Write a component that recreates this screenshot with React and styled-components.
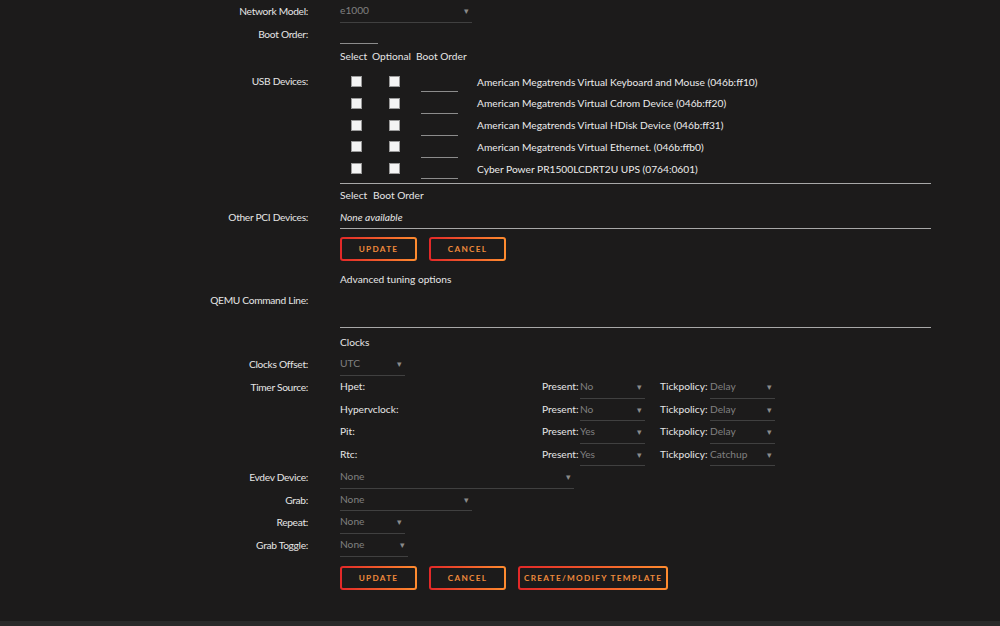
import React from "react";
import styled, { createGlobalStyle } from "styled-components";

const usbDevices = [
  "American Megatrends Virtual Keyboard and Mouse (046b:ff10)",
  "American Megatrends Virtual Cdrom Device (046b:ff20)",
  "American Megatrends Virtual HDisk Device (046b:ff31)",
  "American Megatrends Virtual Ethernet. (046b:ffb0)",
  "Cyber Power PR1500LCDRT2U UPS (0764:0601)",
];

const timers = [
  { name: "Hpet:", present: "No", tick: "Delay" },
  { name: "Hypervclock:", present: "No", tick: "Delay" },
  { name: "Pit:", present: "Yes", tick: "Delay" },
  { name: "Rtc:", present: "Yes", tick: "Catchup" },
];

const App = () => {
  return (
    <Page>
      <GlobalStyle />
      <Form>
        <Row>
          <Label>Network Model:</Label>
          <Select w={132}>e1000</Select>
        </Row>
        <Row>
          <Label>Boot Order:</Label>
          <TextInput w={38} />
        </Row>
        <Row>
          <Label />
          <Head>
            <HeadCell w={32}>Select</HeadCell>
            <HeadCell w={44}>Optional</HeadCell>
            <HeadCell>Boot Order</HeadCell>
          </Head>
        </Row>
        <Row top={3}>
          <Label h={21.75}>USB Devices:</Label>
          <DeviceList>
            {usbDevices.map((dev) => (
              <DeviceRow key={dev}>
                <CheckCell w={32}>
                  <Check />
                </CheckCell>
                <CheckCell w={44}>
                  <Check />
                </CheckCell>
                <OrderCell>
                  <TextInput w={37} />
                </OrderCell>
                <DeviceName>{dev}</DeviceName>
              </DeviceRow>
            ))}
          </DeviceList>
        </Row>
        <Row h={20}>
          <Label />
          <Head>
            <HeadCell w={33}>Select</HeadCell>
            <HeadCell>Boot Order</HeadCell>
          </Head>
        </Row>
        <Row>
          <Label>Other PCI Devices:</Label>
          <Lined>None available</Lined>
        </Row>
        <Row>
          <Label />
          <Buttons top={8}>
            <Button>Update</Button>
            <Button>Cancel</Button>
          </Buttons>
        </Row>
        <Row top={7}>
          <Label />
          <Plain>Advanced tuning options</Plain>
        </Row>
        <Row>
          <Label h={18}>QEMU Command Line:</Label>
          <TextArea />
        </Row>
        <Row top={3}>
          <Label />
          <Plain>Clocks</Plain>
        </Row>
        <Row>
          <Label>Clocks Offset:</Label>
          <Select w={65}>UTC</Select>
        </Row>
        {timers.map((t, i) => (
          <Row key={t.name}>
            <Label>{i === 0 ? "Timer Source:" : ""}</Label>
            <TimerLine>
              <TimerName>{t.name}</TimerName>
              <Inline w={38}>Present:</Inline>
              <Select w={65}>{t.present}</Select>
              <Inline w={50} left={15}>Tickpolicy:</Inline>
              <Select w={65}>{t.tick}</Select>
            </TimerLine>
          </Row>
        ))}
        <Row>
          <Label>Evdev Device:</Label>
          <Select w={234}>None</Select>
        </Row>
        <Row>
          <Label>Grab:</Label>
          <Select w={132}>None</Select>
        </Row>
        <Row>
          <Label>Repeat:</Label>
          <Select w={65}>None</Select>
        </Row>
        <Row>
          <Label>Grab Toggle:</Label>
          <Select w={68}>None</Select>
        </Row>
        <Row>
          <Label />
          <Buttons top={9}>
            <Button>Update</Button>
            <Button>Cancel</Button>
            <Button>Create/Modify Template</Button>
          </Buttons>
        </Row>
      </Form>
      <Footer />
    </Page>
  );
};

const GlobalStyle = createGlobalStyle`
  html, body {
    margin: 0;
    padding: 0;
    background: #1c1b1b;
  }
  body {
    font-family: Lato, "Open Sans", sans-serif;
    font-size: 10.2px;
    color: #e6e6e6;
  }
`;

const Page = styled.div`
  display: flex;
  flex-direction: column;
  height: 100vh;
  overflow: hidden;
`;

const Form = styled.div`
  flex: 1;
`;

const Footer = styled.div`
  height: 5px;
  background: #2a2a2a;
`;

const Row = styled.div`
  display: grid;
  grid-template-columns: 308px 591px;
  column-gap: 32px;
  align-items: start;
  min-height: ${(p) => p.h || 22.6}px;
  margin-top: ${(p) => p.top || 0}px;
`;

const Label = styled.div`
  text-align: right;
  line-height: ${(p) => p.h || 22.6}px;
  letter-spacing: -0.3px;
  color: #e6e6e6;
`;

const Plain = styled.div`
  line-height: 22.6px;
`;

const Select = styled.div`
  position: relative;
  box-sizing: border-box;
  width: ${(p) => p.w}px;
  height: 22.6px;
  line-height: 21.6px;
  color: #808080;
  border-bottom: 1px solid #404040;
  &::after {
    content: "\\25BE";
    position: absolute;
    right: 3px;
    top: 0;
    font-size: 9px;
    color: #8a8a8a;
  }
`;

const TextInput = styled.div`
  box-sizing: border-box;
  width: ${(p) => p.w}px;
  height: 21.6px;
  border-bottom: 1px solid #8c8c8c;
`;

const Head = styled.div`
  display: flex;
  line-height: 22.6px;
`;

const HeadCell = styled.span`
  width: ${(p) => (p.w ? `${p.w}px` : "auto")};
`;

const DeviceList = styled.div`
  border-bottom: 1px solid #a8a8a8;
  padding-bottom: 3px;
`;

const DeviceRow = styled.div`
  display: flex;
  align-items: center;
  height: 21.75px;
`;

const CheckCell = styled.div`
  width: ${(p) => p.w}px;
  display: flex;
  justify-content: center;
`;

const Check = styled.span`
  box-sizing: border-box;
  width: 11px;
  height: 11px;
  background: #f4f4f4;
  border: 1px solid #9a9a9a;
`;

const OrderCell = styled.div`
  width: 56px;
  padding-left: 5px;
  align-self: flex-start;
`;

const DeviceName = styled.span`
  color: #ececec;
`;

const Lined = styled.div`
  box-sizing: border-box;
  height: 23px;
  line-height: 22px;
  font-style: italic;
  border-bottom: 1px solid #a8a8a8;
`;

const Buttons = styled.div`
  display: flex;
  gap: 12px;
  margin-top: ${(p) => p.top || 0}px;
`;

const Button = styled.button`
  box-sizing: border-box;
  min-width: 77px;
  height: 24px;
  padding: 0 4px;
  border: 2px solid transparent;
  border-radius: 3px;
  background: linear-gradient(#1c1b1b, #1c1b1b) padding-box,
    linear-gradient(90deg, #e22828, #ff8c2f) border-box;
  color: #ef8a3c;
  font-family: Lato, "Open Sans", sans-serif;
  font-size: 8.2px;
  font-weight: 700;
  letter-spacing: 1.3px;
  text-transform: uppercase;
`;

const TextArea = styled.div`
  box-sizing: border-box;
  height: 37px;
  border-bottom: 1px solid #a8a8a8;
`;

const TimerLine = styled.div`
  display: flex;
  align-items: flex-start;
  line-height: 21.6px;
`;

const TimerName = styled.span`
  width: 202px;
`;

const Inline = styled.span`
  width: ${(p) => p.w}px;
  margin-left: ${(p) => p.left || 0}px;
`;

export default App;
